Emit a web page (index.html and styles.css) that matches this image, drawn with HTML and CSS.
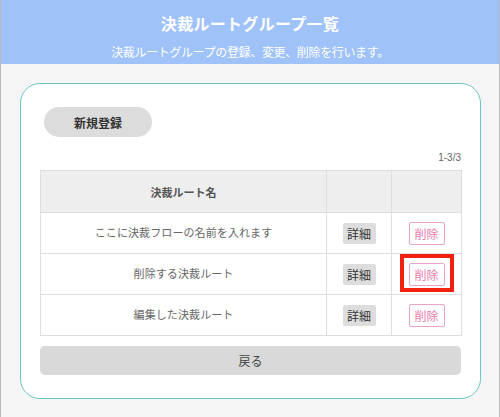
FILE: index.html
```html
<!DOCTYPE html>
<html lang="ja">
<head>
<meta charset="utf-8">
<title>決裁ルートグループ一覧</title>
<link rel="stylesheet" href="styles.css">
</head>
<body>
<header class="header">
  <h1 class="title">決裁ルートグループ一覧</h1>
  <p class="subtitle">決裁ルートグループの登録、変更、削除を行います。</p>
</header>
<main class="main">
  <section class="card">
    <button class="btn-new">新規登録</button>
    <div class="count">1-3/3</div>
    <table class="list">
      <colgroup>
        <col class="c-name"><col class="c-detail"><col class="c-del">
      </colgroup>
      <thead>
        <tr><th>決裁ルート名</th><th></th><th></th></tr>
      </thead>
      <tbody>
        <tr>
          <td class="name">ここに決裁フローの名前を入れます</td>
          <td><span class="btn-detail">詳細</span></td>
          <td><span class="btn-del">削除</span></td>
        </tr>
        <tr>
          <td class="name">削除する決裁ルート</td>
          <td><span class="btn-detail">詳細</span></td>
          <td><span class="mark"><span class="btn-del">削除</span><span class="highlight"></span></span></td>
        </tr>
        <tr>
          <td class="name">編集した決裁ルート</td>
          <td><span class="btn-detail">詳細</span></td>
          <td><span class="btn-del">削除</span></td>
        </tr>
      </tbody>
    </table>
    <button class="btn-back">戻る</button>
  </section>
</main>
</body>
</html>
```
FILE: styles.css
```css
* { box-sizing: border-box; }
html, body { margin: 0; padding: 0; }
body {
  width: 500px;
  height: 417px;
  overflow: hidden;
  background: #f5f5f5;
  border-left: 1px solid #b9b9b9;
  border-right: 1px solid #b9b9b9;
  font-family: "Noto Sans CJK JP", "Noto Sans", sans-serif;
  color: #444;
}
.header {
  height: 64px;
  background: #9fc3f9;
  color: #fff;
  text-align: center;
  padding-top: 12px;
}
.title {
  margin: 0;
  font-size: 16px;
  line-height: 22px;
  font-weight: 700;
  letter-spacing: 0.3px;
}
.subtitle {
  margin: 10px 0 0;
  font-size: 12px;
  line-height: 16px;
  letter-spacing: -0.35px;
}
.main {
  padding: 19px 18px 0 19px;
}
.card {
  width: 461px;
  background: #fff;
  border: 1px solid #6cc6c6;
  border-radius: 20px;
  padding: 0 19px 23px 19px;
  display: flex;
  flex-direction: column;
}
.btn-new {
  align-self: flex-start;
  margin: 23px 0 0 4px;
  width: 108px;
  height: 30px;
  border: none;
  border-radius: 15px;
  background: #dcdcdc;
  font-family: inherit;
  font-size: 12px;
  font-weight: 700;
  color: #333;
  padding: 0;
}
.count {
  margin: 14px 0 5px;
  text-align: right;
  font-family: "Liberation Sans", sans-serif;
  font-size: 10px;
  line-height: 14px;
  color: #666;
}
.list {
  width: 421px;
  border-collapse: collapse;
  table-layout: fixed;
}
.c-name { width: 286px; }
.c-detail { width: 65px; }
.c-del { width: 70px; }
.list th, .list td {
  border: 1px solid #dedede;
  text-align: center;
  vertical-align: middle;
  padding: 0;
}
.list th {
  height: 42px;
  background: #eeeeee;
  font-size: 11px;
  font-weight: 700;
  color: #555;
}
.list td {
  height: 41px;
  font-size: 11px;
  color: #666;
}
.list td.name {
  padding-bottom: 2px;
  letter-spacing: 0.1px;
}
.btn-detail {
  display: inline-flex;
  align-items: center;
  justify-content: center;
  width: 33px;
  height: 21px;
  background: #dddddd;
  border-radius: 2px;
  font-size: 12px;
  color: #333;
}
.btn-del {
  display: inline-flex;
  align-items: center;
  justify-content: center;
  width: 36px;
  height: 23px;
  background: #fff;
  border: 1px solid #eaa3c4;
  border-radius: 2px;
  font-size: 12px;
  color: #e97aa9;
}
.mark {
  position: relative;
  display: inline-block;
  vertical-align: middle;
}
.mark .btn-del { vertical-align: top; }
.highlight {
  position: absolute;
  top: -9px;
  left: -9px;
  width: 54px;
  height: 38px;
  border: 4px solid #f2200e;
}
.btn-back {
  margin-top: 10px;
  height: 29px;
  width: 421px;
  border: none;
  border-radius: 5px;
  background: #d9d9d9;
  font-family: inherit;
  font-size: 12px;
  color: #444;
  padding: 0;
}
```
